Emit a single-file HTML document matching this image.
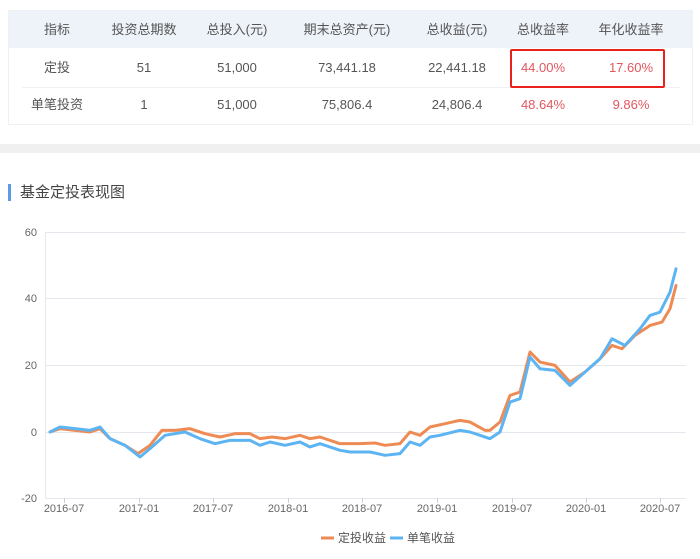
<!DOCTYPE html>
<html><head><meta charset="utf-8"><style>
body{margin:0;width:700px;height:559px;background:#fff;font-family:"Liberation Sans","Noto Sans CJK SC",sans-serif;color:#555;position:relative;overflow:hidden}
.tb{position:absolute;left:8px;top:10px;width:683px;height:113px;border:1px solid #eef0f4;}
.hd{position:absolute;left:0;top:0;width:683px;height:37px;background:#eef2f9}
.c{position:absolute;font-size:13px;line-height:16px;height:16px;transform:translateX(-50%);white-space:nowrap}
.r{color:#e4565f}
.sep{position:absolute;left:13px;width:658px;top:76px;height:1px;background:#eef0f4}
</style></head><body>
<div class="tb"><div class="hd"></div><div class="sep"></div></div>
<div class="c" style="left:57px;top:22px">指标</div>
<div class="c" style="left:144px;top:22px">投资总期数</div>
<div class="c" style="left:237px;top:22px">总投入(元)</div>
<div class="c" style="left:347px;top:22px">期末总资产(元)</div>
<div class="c" style="left:457px;top:22px">总收益(元)</div>
<div class="c" style="left:543px;top:22px">总收益率</div>
<div class="c" style="left:631px;top:22px">年化收益率</div>
<div class="c" style="left:57px;top:60px">定投</div>
<div class="c" style="left:144px;top:60px">51</div>
<div class="c" style="left:237px;top:60px">51,000</div>
<div class="c" style="left:347px;top:60px">73,441.18</div>
<div class="c" style="left:457px;top:60px">22,441.18</div>
<div class="c r" style="left:543px;top:60px">44.00%</div>
<div class="c r" style="left:631px;top:60px">17.60%</div>
<div class="c" style="left:57px;top:97px">单笔投资</div>
<div class="c" style="left:144px;top:97px">1</div>
<div class="c" style="left:237px;top:97px">51,000</div>
<div class="c" style="left:347px;top:97px">75,806.4</div>
<div class="c" style="left:457px;top:97px">24,806.4</div>
<div class="c r" style="left:543px;top:97px">48.64%</div>
<div class="c r" style="left:631px;top:97px">9.86%</div>
<div style="position:absolute;left:510px;top:49px;width:151px;height:35px;border:2px solid #e8211c;border-radius:2px"></div>
<div style="position:absolute;left:0;top:144px;width:700px;height:9px;background:#f0f0f0"></div>
<div style="position:absolute;left:8px;top:184px;width:3px;height:17px;background:#5b9bea"></div>
<div style="position:absolute;left:20px;top:183px;font-size:15px;line-height:19px;color:#444">基金定投表现图</div>
<svg width="700" height="559" style="position:absolute;left:0;top:0" font-family="Liberation Sans,sans-serif" font-size="11" fill="#666">
<g stroke="#e4e8ee" stroke-width="1">
<line x1="45" y1="232.5" x2="686" y2="232.5"/><line x1="45" y1="298.5" x2="686" y2="298.5"/><line x1="45" y1="365.5" x2="686" y2="365.5"/><line x1="45" y1="432.5" x2="686" y2="432.5"/>
<line x1="45.5" y1="232" x2="45.5" y2="498"/><line x1="45" y1="498.5" x2="686" y2="498.5"/>
</g>
<g stroke="#ccd" stroke-width="1">
<line x1="64.5" y1="498" x2="64.5" y2="503"/><line x1="139.5" y1="498" x2="139.5" y2="503"/><line x1="213.5" y1="498" x2="213.5" y2="503"/><line x1="288.5" y1="498" x2="288.5" y2="503"/><line x1="362.5" y1="498" x2="362.5" y2="503"/><line x1="437.5" y1="498" x2="437.5" y2="503"/><line x1="512.5" y1="498" x2="512.5" y2="503"/><line x1="586.5" y1="498" x2="586.5" y2="503"/><line x1="660.5" y1="498" x2="660.5" y2="503"/>
</g>
<g text-anchor="end"><text x="37" y="236">60</text><text x="37" y="302">40</text><text x="37" y="369">20</text><text x="37" y="436">0</text><text x="37" y="502">-20</text></g>
<g text-anchor="middle"><text x="64" y="512">2016-07</text><text x="139" y="512">2017-01</text><text x="213" y="512">2017-07</text><text x="288" y="512">2018-01</text><text x="362" y="512">2018-07</text><text x="437" y="512">2019-01</text><text x="512" y="512">2019-07</text><text x="586" y="512">2020-01</text><text x="660" y="512">2020-07</text></g>
<g transform="translate(0,432) scale(1,-3.33)" fill="none" stroke-linejoin="round" stroke-linecap="round">
<polyline vector-effect="non-scaling-stroke" stroke="#ee8b54" stroke-width="3" points="50,0 60,1 75,0.5 90,0 100,1 110,-2 125,-4 138,-6.5 150,-4 162,0.5 175,0.5 190,1 205,-0.5 220,-1.5 235,-0.5 250,-0.5 260,-2 272,-1.5 285,-2 300,-1 310,-2 320,-1.5 340,-3.5 360,-3.5 375,-3.3 385,-4 400,-3.5 410,0 420,-1 430,1.5 445,2.5 460,3.5 470,3 485,0.5 490,0.5 500,3 510,11 520,12 530,24 540,21 555,20 570,15 585,18 600,22 612,26 622,25 635,29 650,32 662,33 670,37 676,44"/>
<polyline vector-effect="non-scaling-stroke" stroke="#5db4f2" stroke-width="3" points="50,0 60,1.5 75,1 90,0.5 100,1.5 110,-2 125,-4 140,-7.5 150,-5 165,-1 185,0 200,-2 215,-3.5 230,-2.5 250,-2.5 260,-4 270,-3 285,-4 300,-3 310,-4.5 320,-3.5 340,-5.5 350,-6 370,-6 385,-7 400,-6.5 410,-3 420,-4 430,-1.5 440,-1 460,0.5 470,0 480,-1 490,-2 500,0 510,9 520,10 530,22.5 540,19 555,18.5 570,14 585,18 600,22 612,28 625,26 640,31 650,35 660,36 670,42 676,49"/>
</g>
<line x1="321" y1="538" x2="334" y2="538" stroke="#ee8b54" stroke-width="3"/>
<text x="338" y="542" font-size="12" fill="#555" font-family="Liberation Sans,Noto Sans CJK SC,sans-serif">定投收益</text>
<line x1="390" y1="538" x2="403" y2="538" stroke="#5db4f2" stroke-width="3"/>
<text x="407" y="542" font-size="12" fill="#555" font-family="Liberation Sans,Noto Sans CJK SC,sans-serif">单笔收益</text>
</svg>
</body></html>
